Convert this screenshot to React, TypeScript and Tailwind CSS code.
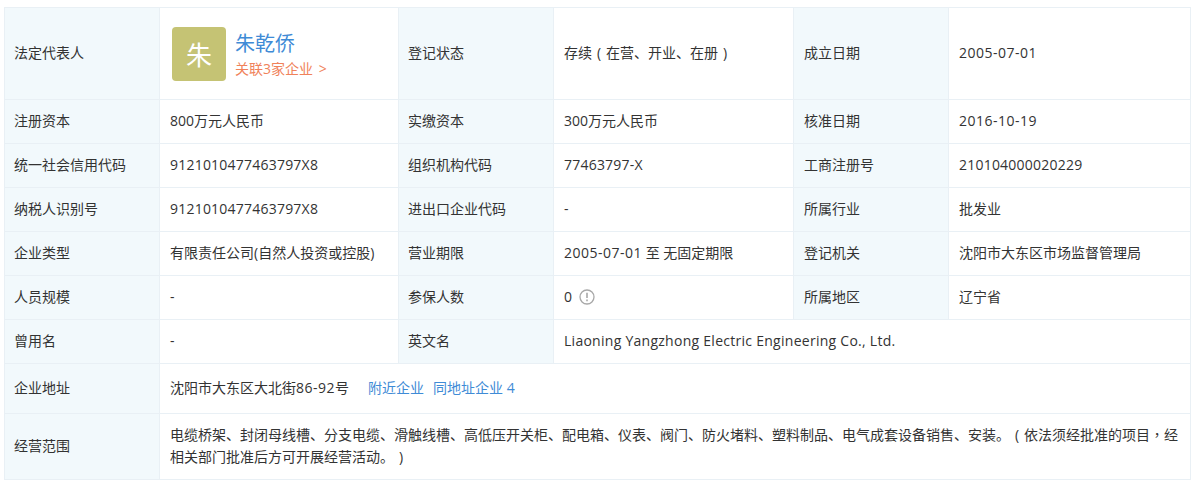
import React from 'react';

const LABEL = 'border border-[#e9f0f5] bg-[#f2f9fc] pl-[9px] pr-[10px] pb-[2px] align-middle';
const LABEL_LAST = 'border border-[#e9f0f5] bg-[#f2f9fc] px-[10px] pb-[2px] align-middle';
const VALUE = 'border border-[#e9f0f5] bg-white px-[10px] pb-[2px] align-middle';

type Cell = { label: string; value: React.ReactNode };

// full-width brackets sit centred in their box in the original font
const Bracket = ({ children }: { children: string }) => (
  <span className="inline-block w-[14px] text-center">{children}</span>
);

const Code = ({ children }: { children: string }) => (
  <span className="tracking-[0.22px]">{children}</span>
);

const Day = ({ children }: { children: string }) => (
  <span className="tracking-[0.5px]">{children}</span>
);

const ROWS: { cells: Cell[] }[] = [
  {
    cells: [
      { label: '注册资本', value: '800万元人民币' },
      { label: '实缴资本', value: '300万元人民币' },
      { label: '核准日期', value: <Day>2016-10-19</Day> },
    ],
  },
  {
    cells: [
      { label: '统一社会信用代码', value: <Code>9121010477463797X8</Code> },
      { label: '组织机构代码', value: <Code>77463797-X</Code> },
      { label: '工商注册号', value: <Code>210104000020229</Code> },
    ],
  },
  {
    cells: [
      { label: '纳税人识别号', value: <Code>9121010477463797X8</Code> },
      { label: '进出口企业代码', value: '-' },
      { label: '所属行业', value: '批发业' },
    ],
  },
  {
    cells: [
      { label: '企业类型', value: '有限责任公司(自然人投资或控股)' },
      {
        label: '营业期限',
        value: (
          <>
            <Day>2005-07-01</Day> 至 无固定期限
          </>
        ),
      },
      { label: '登记机关', value: '沈阳市大东区市场监督管理局' },
    ],
  },
  {
    cells: [
      { label: '人员规模', value: '-' },
      {
        label: '参保人数',
        value: (
          <span className="inline-flex items-center gap-[7px]">
            0
            <svg width="16" height="16" viewBox="0 0 16 16" fill="none">
              <circle cx="8" cy="8" r="7" stroke="#a8a8a8" strokeWidth="1.3" />
              <path d="M8 3.8v5.2M8 10.6v1.7" stroke="#a8a8a8" strokeWidth="1.6" />
            </svg>
          </span>
        ),
      },
      { label: '所属地区', value: '辽宁省' },
    ],
  },
];

export default function App() {
  return (
    <div className="h-[482px] w-[1198px] overflow-hidden bg-white pl-[4px] pt-[7px] font-['Open_Sans','Noto_Sans_CJK_SC',sans-serif] text-[14px] leading-[22px] text-[#333]">
      <table className="w-[1186px] table-fixed border-collapse">
        <colgroup>
          <col className="w-[155px]" />
          <col className="w-[239px]" />
          <col className="w-[155px]" />
          <col className="w-[240px]" />
          <col className="w-[155px]" />
          <col className="w-[242px]" />
        </colgroup>
        <tbody>
          <tr className="h-[92px]">
            <td className={LABEL}>法定代表人</td>
            <td className="border border-[#e9f0f5] bg-white px-[10px] align-middle">
              <div className="flex items-center gap-[9px] pl-[2px]">
                <div className="flex h-[54px] w-[54px] items-center justify-center rounded-[4px] bg-[#c5c374] pt-[2px] text-[26px] text-white">
                  朱
                </div>
                <div>
                  <div className="text-[20px] leading-[30px] text-[#3f8bd6]">朱乾侨</div>
                  <div className="text-[14px] leading-[20px] text-[#f0825a]">
                    关联3家企业 <span className="ml-[2px]">&gt;</span>
                  </div>
                </div>
              </div>
            </td>
            <td className={LABEL}>登记状态</td>
            <td className={VALUE}>
              存续<Bracket>(</Bracket>在营、开业、在册<Bracket>)</Bracket>
            </td>
            <td className={LABEL_LAST}>成立日期</td>
            <td className={VALUE}>
              <Day>2005-07-01</Day>
            </td>
          </tr>
          {ROWS.map((row) => (
            <tr key={row.cells[0].label} className="h-[44px]">
              {row.cells.map((cell, i) => (
                <React.Fragment key={cell.label}>
                  <td className={i === 2 ? LABEL_LAST : LABEL}>{cell.label}</td>
                  <td className={VALUE}>{cell.value}</td>
                </React.Fragment>
              ))}
            </tr>
          ))}
          <tr className="h-[44px]">
            <td className={LABEL}>曾用名</td>
            <td className={VALUE}>-</td>
            <td className={LABEL}>英文名</td>
            <td className={VALUE} colSpan={3}>
              <span className="tracking-[0.27px]">Liaoning Yangzhong Electric Engineering Co., Ltd.</span>
            </td>
          </tr>
          <tr className="h-[50px]">
            <td className={LABEL}>企业地址</td>
            <td className={VALUE} colSpan={5}>
              沈阳市大东区大北街<span className="tracking-[0.5px]">86-92</span>号
              <a className="ml-[19px] text-[#3f8bd6]">附近企业</a>
              <a className="ml-[9px] text-[#3f8bd6]">同地址企业 4</a>
            </td>
          </tr>
          <tr className="h-[66px]">
            <td className={LABEL}>经营范围</td>
            <td className={VALUE} colSpan={5}>
              <div className="whitespace-nowrap">
                电缆桥架、封闭母线槽、分支电缆、滑触线槽、高低压开关柜、配电箱、仪表、阀门、防火堵料、塑料制品、电气成套设备销售、安装。<Bracket>(</Bracket>依法须经批准的项目<span className="font-['Noto_Sans_CJK_TC',sans-serif]">，</span>经
              </div>
              <div>
                相关部门批准后方可开展经营活动。<Bracket>)</Bracket>
              </div>
            </td>
          </tr>
        </tbody>
      </table>
    </div>
  );
}
